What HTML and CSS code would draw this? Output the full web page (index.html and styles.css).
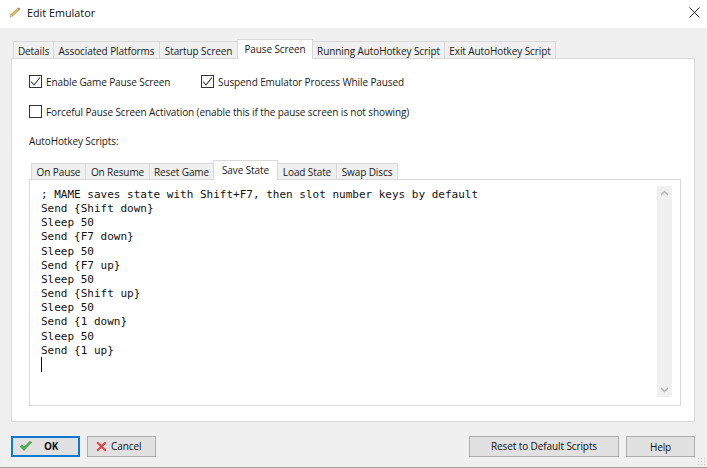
FILE: index.html
```html
<!DOCTYPE html>
<html lang="en">
<head>
<meta charset="utf-8">
<title>Edit Emulator</title>
<link rel="stylesheet" href="styles.css">
</head>
<body>
<div class="window">
  <header class="titlebar">
    <svg class="title-icon" width="12" height="11" viewBox="0 0 12 11"><path d="M2 7.4 L8.6 1.4 L10.2 3 L3.6 9 Z" fill="#e6bd4c" stroke="#9c8440" stroke-width=".6"/><path d="M8.6 1.4 L9.8 .4 L11.4 2 L10.2 3 Z" fill="#b9776c"/><path d="M2 7.4 L1 10.4 L3.6 9 Z" fill="#e2cfae" stroke="#8a7a60" stroke-width=".4"/></svg>
    <span class="title-text">Edit Emulator</span>
    <svg class="close-icon" width="11" height="11" viewBox="0 0 11 11"><path d="M.5 .5 L10.5 10.5 M10.5 .5 L.5 10.5" stroke="#222" stroke-width="1" fill="none"/></svg>
  </header>
  <main class="body">
    <nav class="tabs outer-tabs">
      <span class="tab t-details">Details</span>
      <span class="tab t-assoc">Associated Platforms</span>
      <span class="tab t-startup">Startup Screen</span>
      <span class="tab active t-pause">Pause Screen</span>
      <span class="tab t-running">Running AutoHotkey Script</span>
      <span class="tab t-exit">Exit AutoHotkey Script</span>
    </nav>
    <section class="panel">
      <div class="check-row first">
        <label class="check c-enable"><span class="box"><svg width="11" height="11" viewBox="0 0 11 11"><path d="M1 5.5 L4 9 L10 1.5" fill="none" stroke="#333" stroke-width="1.1"/></svg></span>Enable Game Pause Screen</label>
        <label class="check"><span class="box"><svg width="11" height="11" viewBox="0 0 11 11"><path d="M1 5.5 L4 9 L10 1.5" fill="none" stroke="#333" stroke-width="1.1"/></svg></span>Suspend Emulator Process While Paused</label>
      </div>
      <div class="check-row second">
        <label class="check"><span class="box"></span>Forceful Pause Screen Activation (enable this if the pause screen is not showing)</label>
      </div>
      <div class="scripts-label">AutoHotkey Scripts:</div>
      <nav class="tabs inner-tabs">
        <span class="tab i-pause">On Pause</span>
        <span class="tab i-resume">On Resume</span>
        <span class="tab i-reset">Reset Game</span>
        <span class="tab active i-save">Save State</span>
        <span class="tab i-load">Load State</span>
        <span class="tab i-swap">Swap Discs</span>
      </nav>
      <div class="inner-panel">
        <div class="editor">
          <div class="code"><div class="comment">; MAME saves state with Shift+F7, then slot number keys by default</div><div>Send {Shift down}</div><div>Sleep 50</div><div>Send {F7 down}</div><div>Sleep 50</div><div>Send {F7 up}</div><div>Sleep 50</div><div>Send {Shift up}</div><div>Sleep 50</div><div>Send {1 down}</div><div>Sleep 50</div><div>Send {1 up}</div><div class="caret"></div></div>
          <div class="scrollbar">
            <svg width="15" height="15" viewBox="0 0 15 15"><path d="M4 9 L7.5 5.5 L11 9" fill="none" stroke="#b4b4b4" stroke-width="1.5"/></svg>
            <svg width="15" height="15" viewBox="0 0 15 15"><path d="M4 6 L7.5 9.5 L11 6" fill="none" stroke="#b4b4b4" stroke-width="1.5"/></svg>
          </div>
        </div>
      </div>
    </section>
    <footer class="buttons">
      <button class="btn btn-ok"><svg width="14" height="12" viewBox="0 0 14 12"><path d="M1 6.5 L5 10.5 L13 2 L10.5 1.5 L5 7 L3 4.8 Z" fill="#4cb04c" stroke="#3a9a3a" stroke-width=".5"/></svg><span>OK</span></button>
      <button class="btn btn-cancel"><svg width="11" height="11" viewBox="0 0 11 11"><path d="M1.2 1.2 L9.8 9.8 M9.8 1.2 L1.2 9.8" stroke="#e0474c" stroke-width="2.2" fill="none"/></svg><span>Cancel</span></button>
      <span class="spacer"></span>
      <button class="btn btn-reset">Reset to Default Scripts</button>
      <button class="btn btn-help">Help</button>
    </footer>
    <div class="grip"></div>
  </main>
</div>
</body>
</html>
```

FILE: styles.css
```css
* { box-sizing: border-box; }
html, body { margin: 0; padding: 0; }
body {
  width: 707px;
  height: 468px;
  overflow: hidden;
  font-family: "Open Sans", "Noto Sans", "Liberation Sans", sans-serif;
  font-size: 10px;
  letter-spacing: -0.1px;
  color: #1a1a1a;
  background: #f0f0f0;
}
.window { display: flex; flex-direction: column; height: 468px; }
.titlebar {
  height: 28px;
  background: #fff;
  display: flex;
  align-items: center;
  padding: 0 7px 3px 9px;
  flex: none;
}
.title-icon { margin-right: 6px; }
.title-text { font-size: 10.8px; letter-spacing: 0; color: #111; flex: 1; }
.close-icon { margin-right: 0; }
.body {
  flex: 1;
  padding: 11px 12px 0 11px;
  display: flex;
  flex-direction: column;
  position: relative;
  border-bottom: 1px solid #a0a0a0;
}
.tabs { display: flex; align-items: flex-end; flex: none; }
.tab {
  display: flex;
  align-items: center;
  justify-content: center;
  white-space: nowrap;
  background: #f0f0f0;
  border: 1px solid #d9d9d9;
  border-bottom: 0;
  margin-left: -1px;
  position: relative;
  padding-top: 1px;
}
.tab.active {
  background: #fff;
  z-index: 2;
  padding-bottom: 2px;
  margin-bottom: -1px;
}
.outer-tabs { height: 19px; padding-left: 3px; }
.outer-tabs .tab { height: 17px; }
.outer-tabs .tab.active { height: 20px; }
.t-details { width: 41px; }
.t-assoc { width: 107px; }
.t-startup { width: 79px; }
.t-pause { width: 76px; }
.t-running { width: 133px; }
.t-exit { width: 112px; }
.panel {
  width: 684px;
  height: 364px;
  background: #fff;
  border: 1px solid #d9d9d9;
  padding: 0 14px 15px 17px;
  display: flex;
  flex-direction: column;
  flex: none;
}
.check-row { display: flex; align-items: center; }
.check-row.first { margin-top: 15px; height: 15px; }
.check-row.second { margin-top: 15px; height: 15px; }
.check { display: flex; align-items: center; white-space: nowrap; }
.c-enable { width: 172px; }
.box {
  width: 13px;
  height: 13px;
  border: 1px solid #333;
  background: #fff;
  margin-right: 4px;
  flex: none;
  display: flex;
  align-items: center;
  justify-content: center;
}
.box svg { display: block; }
.scripts-label { margin-top: 15px; height: 15px; line-height: 15px; }
.inner-tabs { height: 17px; margin-top: 13px; padding-left: 3px; }
.inner-tabs .tab { height: 16px; }
.inner-tabs .tab.active { height: 20px; padding-bottom: 3px; }
.i-pause { width: 55px; }
.i-resume { width: 65px; }
.i-reset { width: 65px; }
.i-save { width: 65px; }
.i-load { width: 60px; }
.i-swap { width: 62px; }
.inner-panel {
  flex: 1;
  width: 652px;
  border: 1px solid #d9d9d9;
  padding: 6px 8px 8px 11px;
  background: #fff;
}
.editor { display: flex; height: 100%; }
.code {
  flex: 1;
  padding-top: 2px;
  font-family: "DejaVu Sans Mono", "Liberation Mono", monospace;
  font-size: 11px;
  letter-spacing: 0;
  line-height: 14.15px;
  color: #111;
}
.caret { width: 1px; height: 15px; margin-top: -1px; background: #111; }
.scrollbar {
  width: 15px;
  background: #f0f0f0;
  display: flex;
  flex-direction: column;
  justify-content: space-between;
  flex: none;
}
.scrollbar svg { display: block; }
.buttons {
  display: flex;
  align-items: center;
  margin-top: 14px;
  height: 21px;
  width: 684px;
}
.btn {
  height: 21px;
  background: #e1e1e1;
  border: 1px solid #adadad;
  font: inherit;
  letter-spacing: inherit;
  color: #111;
  padding: 0 0 1px;
  display: flex;
  align-items: center;
  justify-content: center;
}
.btn-ok {
  width: 69px;
  border: 2px solid #0f78d4;
  font-weight: 700;
  justify-content: flex-start;
  padding-left: 6px;
}
.btn-ok span { margin-left: 11px; }
.btn-cancel {
  width: 69px;
  margin-left: 7px;
  justify-content: flex-start;
  padding-left: 8px;
}
.btn-cancel span { margin-left: 4px; }
.spacer { flex: 1; }
.btn-reset { width: 150px; }
.btn-help { width: 69px; margin-left: 7px; padding: 1px 0 0; }
.grip {
  position: absolute;
  right: 1px;
  bottom: 1px;
  width: 9px;
  height: 9px;
  background-image: radial-gradient(#b8b8b8 1px, transparent 1px);
  background-size: 3px 3px;
}
```
